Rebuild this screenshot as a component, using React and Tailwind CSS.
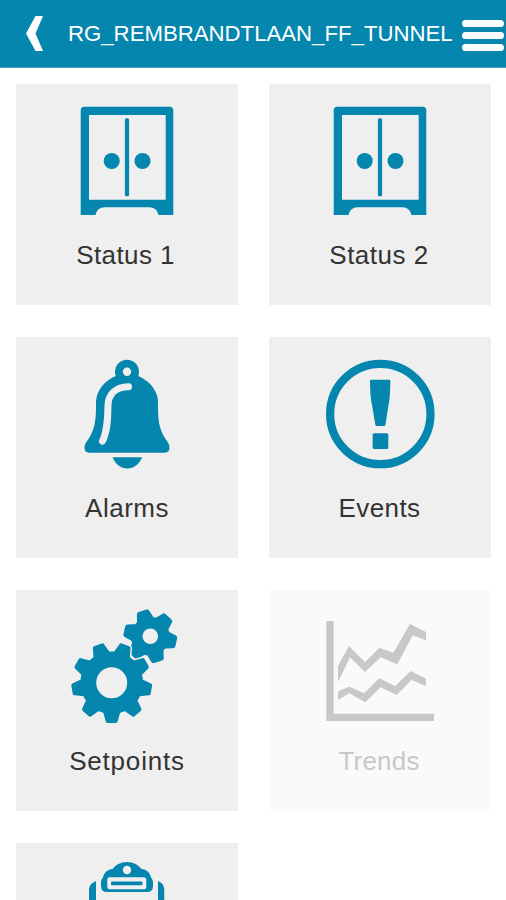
import React from 'react';

const BLUE = '#0486ae';
const TILE = '#efefef';

// closed outline of a cog wheel, `start` is the angle of the first tooth in degrees
const gearPath = (cx, cy, outer, root, teeth, start, tipWidth, rootWidth) => {
  const points = [];
  for (let i = 0; i < teeth; i++) {
    const mid = start + (360 / teeth) * i;
    const corners = [
      [root, mid - rootWidth],
      [outer, mid - tipWidth],
      [outer, mid + tipWidth],
      [root, mid + rootWidth],
    ];
    corners.forEach(([r, deg]) => {
      const a = (deg * Math.PI) / 180;
      points.push(`${(cx + r * Math.cos(a)).toFixed(2)} ${(cy + r * Math.sin(a)).toFixed(2)}`);
    });
  }
  return `M${points.join('L')}Z`;
};

const smallGear = gearPath(83.3, 28.3, 24.5, 17, 6, 253, 9.5, 22);
const bigGear = gearPath(44.7, 74.7, 38.5, 29.5, 9, 90, 6, 13);

const CabinetIcon = () => (
  <svg className="size-[120px]" viewBox="0 0 120 120" fill={BLUE}>
    <path
      fillRule="evenodd"
      d="M17.2 4.7H102.8Q106.3 4.7 106.3 8.2V113H91.5C90.5 109 88 105.3 82.5 105.3H37.5C32 105.3 29.5 109 28.5 113H13.7V8.2Q13.7 4.7 17.2 4.7ZM22 13V97.7H98.7V13Z"
    />
    <rect x="57.9" y="16.3" width="4.2" height="78" rx="1.5" />
    <circle cx="44.7" cy="59" r="8" />
    <circle cx="75.5" cy="59" r="8" />
  </svg>
);

const BellIcon = () => (
  <svg className="size-[120px]" viewBox="0 0 120 120" fill={BLUE}>
    <circle cx="60" cy="16.8" r="12" />
    <path d="M60 19C67 19 73 21 79 25.5C87 31.5 91 39 91 48C91 64 91.5 73 98.5 84C100.5 87 102.5 89 102.5 92.5Q102.5 97.7 97.5 97.7H22.5Q17.5 97.7 17.5 92.5C17.5 89 19.5 87 21.5 84C28.5 73 29 64 29 48C29 39 33 31.5 41 25.5C47 21 53 19 60 19Z" />
    <path d="M45.5 102.3H75.2C72 109.5 67 113.5 60.3 113.5S48.5 109.5 45.5 102.3Z" />
    <circle cx="60" cy="16.8" r="4.2" fill={TILE} />
    <path
      d="M61.5 31.8C49 32 41.5 39 41 50C40.8 62 40.5 76 35.5 86"
      fill="none"
      stroke={TILE}
      strokeWidth="7"
      strokeLinecap="round"
    />
  </svg>
);

const EventIcon = () => (
  <svg className="size-[120px]" viewBox="0 0 120 120" fill={BLUE}>
    <circle cx="60.3" cy="59" r="50.2" fill="none" stroke={BLUE} strokeWidth="8.2" />
    <path d="M51 24.7H69.3Q70.3 24.7 70.3 25.7Q70.3 42 68.5 50L65.5 69.5Q65.2 71 64 71H56.8Q55.6 71 55.3 69.5L52 50Q50 42 50 25.7Q50 24.7 51 24.7Z" />
    <rect x="52.6" y="78.3" width="15.7" height="15.7" rx="1.5" />
  </svg>
);

const GearsIcon = () => (
  <svg className="size-[120px]" viewBox="0 0 120 120" fill={BLUE} strokeLinejoin="round">
    <path d={smallGear} stroke={BLUE} strokeWidth="5" />
    <path d={bigGear} stroke={TILE} strokeWidth="7" />
    <path d={bigGear} stroke={BLUE} strokeWidth="4" />
    <circle cx="83.3" cy="28.3" r="7.8" fill={TILE} />
    <circle cx="44.7" cy="74.7" r="15.5" fill={TILE} />
  </svg>
);

const TrendsIcon = () => (
  <svg className="size-[120px]" viewBox="0 0 120 120" fill="#c8c8c8">
    <path d="M6.3 13H13.7V105.7H114V113H6.3Z" />
    <path d="M18 57.7L29 38L45 54.3L59.3 39.7L73.3 44.7L90 16L106 24V32.3L92.7 27.3L77.3 56.3L60.7 49.3L45 64L30 49.3L18 74Z" />
    <path d="M18 83.3L29.3 78.7L44 85.3L59.3 70.3L75 78L90.7 63L106 70.7V78L91.3 72L76.7 87L60.7 79.3L45.3 94.3L29.3 85.3L18 92Z" />
  </svg>
);

const ClipboardIcon = () => (
  <svg className="size-[120px]" viewBox="0 0 120 120" fill={BLUE}>
    <path d="M29 20V107H91V20C95 21.5 97.3 24.5 97.3 29V113H22V29C22 24.5 25 21.5 29 20Z" />
    <path d="M60 1C67 1 71 4 74.5 8C80 8.5 83 12 84 16.5C85.5 18 86 20 86 22V25Q86 31 80 31H40Q34 31 34 25V22C34 20 34.5 18 36 16.5C37 12 40 8.5 45.5 8C49 4 53 1 60 1Z" />
    <circle cx="60" cy="9" r="4.2" fill={TILE} />
    <rect x="40.3" y="16.3" width="39" height="12" rx="2.5" fill={TILE} />
    <rect x="44" y="20.4" width="31.5" height="3.8" rx="1" />
  </svg>
);

const tiles = [
  { label: 'Status 1', Icon: CabinetIcon, spacing: 'tracking-[0.4px] pr-[3px]' },
  { label: 'Status 2', Icon: CabinetIcon, spacing: 'tracking-[0.5px] pr-[2px]' },
  { label: 'Alarms', Icon: BellIcon, spacing: 'tracking-[0.5px]' },
  { label: 'Events', Icon: EventIcon, spacing: 'tracking-[0.4px] pr-px' },
  { label: 'Setpoints', Icon: GearsIcon, spacing: 'tracking-[0.8px]' },
  { label: 'Trends', Icon: TrendsIcon, spacing: 'tracking-[0.2px] pr-[2px]', disabled: true },
  { label: '', Icon: ClipboardIcon },
];

const Header = () => (
  <header className="flex h-[68px] shrink-0 items-center border-b border-[#4ba8c6] bg-[#0486ae] text-white">
    <button className="ml-[26px] w-[17px]" aria-label="Back">
      <svg className="h-[35px] w-[17px]" viewBox="0 0 17 35" fill="white">
        <path d="M9.5 0H17L9.5 17.5L17 35H9.5L0 17.5Z" />
      </svg>
    </button>
    <h1 className="ml-[25px] w-[384px] whitespace-nowrap text-[22.2px] leading-7">RG_REMBRANDTLAAN_FF_TUNNEL</h1>
    <button className="mt-[3px] ml-[10px] flex w-[42px] flex-col gap-[5px]" aria-label="Menu">
      <span className="h-[7px] w-full rounded-full bg-white" />
      <span className="h-[7px] w-full rounded-full bg-white" />
      <span className="h-[7px] w-full rounded-full bg-white" />
    </button>
  </header>
);

const Tile = ({ label, Icon, spacing = '', disabled }) => (
  <button
    disabled={disabled}
    className={`flex h-[221px] flex-col items-center pt-[18px] ${
      disabled ? 'bg-[#fafafa] text-[#c8c8c8]' : 'bg-[#efefef] text-[#333]'
    }`}
  >
    <Icon />
    <span className={`mt-[17px] text-[26px] leading-8 ${spacing}`}>{label}</span>
  </button>
);

export default function App() {
  return (
    <div className="flex h-[900px] w-[506px] flex-col overflow-hidden bg-white font-['Liberation_Sans',Arial,sans-serif]">
      <Header />
      <main className="grid grid-cols-[222px_222px] gap-x-[31px] gap-y-8 pt-4 pl-4">
        {tiles.map((tile, i) => (
          <Tile key={i} {...tile} />
        ))}
      </main>
    </div>
  );
}
